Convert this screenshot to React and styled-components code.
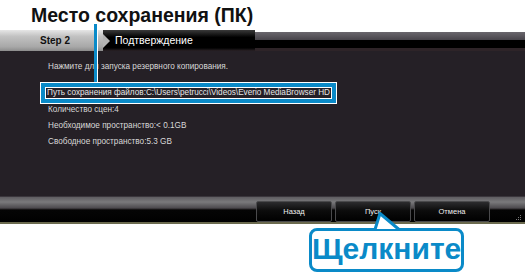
import styled, { createGlobalStyle } from "styled-components";

const BLUE = "#0a8ac8";

const GlobalStyle = createGlobalStyle`
  html, body {
    margin: 0;
    padding: 0;
    background: #ffffff;
  }
  body {
    font-family: "Liberation Sans", Arial, sans-serif;
  }
`;

export default function App() {
  return (
    <>
      <GlobalStyle />
      <Page>
        <Heading>Место сохранения (ПК)</Heading>
        <Window>
          <Header>
            <StepTab>Step 2</StepTab>
            <TitleTab>Подтверждение</TitleTab>
            <HeaderRest />
          </Header>
          <Content>
            <Line>Нажмите для запуска резервного копирования.</Line>
            <PathBox>
              <PathText>
                Путь сохранения файлов:C:\Users\petrucci\Videos\Everio MediaBrowser HD
              </PathText>
            </PathBox>
            <InfoList>
              <Line>Количество сцен:4</Line>
              <Line>Необходимое пространство:&lt; 0.1GB</Line>
              <Line>Свободное пространство:5.3 GB</Line>
            </InfoList>
          </Content>
          <Footer>
            <Button>Назад</Button>
            <Button>Пуск</Button>
            <Button>Отмена</Button>
            <Grip viewBox="0 0 8 8">
              <rect x="6" y="2" width="1" height="1" />
              <rect x="4" y="4" width="1" height="1" />
              <rect x="6" y="4" width="1" height="1" />
              <rect x="2" y="6" width="1" height="1" />
              <rect x="4" y="6" width="1" height="1" />
              <rect x="6" y="6" width="1" height="1" />
            </Grip>
          </Footer>
        </Window>
        <Leader />
        <Callout>
          <CalloutPointer viewBox="0 0 26 18">
            <polygon points="1,17 6,1 25,17" fill="#fff" stroke="none" />
            <polyline points="1,17.5 6,1.5 25,17.5" fill="none" stroke={BLUE} strokeWidth="3" strokeLinejoin="round" />
          </CalloutPointer>
          Щелкните
        </Callout>
      </Page>
    </>
  );
}

const Page = styled.div`
  position: relative;
  width: 525px;
  height: 274px;
  overflow: hidden;
`;

const Heading = styled.div`
  padding: 5px 0 0 31px;
  height: 20px;
  line-height: 20px;
  font-size: 19.5px;
  font-weight: bold;
  color: #111;
  margin-bottom: 5px;
`;

const Window = styled.div`
  display: flex;
  flex-direction: column;
  background: #252026;
`;

const Header = styled.div`
  display: flex;
  height: 21px;
  background: #fff;
`;

const StepTab = styled.div`
  position: relative;
  width: 103px;
  padding-left: 40px;
  box-sizing: border-box;
  background: linear-gradient(#e6e6e6, #c2c2c2 30%, #a8a8a8 80%, #8c8c8c);
  font-size: 10px;
  font-weight: bold;
  line-height: 21px;
  color: #111;

  &::after {
    content: "";
    position: absolute;
    right: -7px;
    top: 4px;
    border-top: 7px solid transparent;
    border-bottom: 7px solid transparent;
    border-left: 7px solid #b4b4b4;
    z-index: 1;
  }
`;

const TitleTab = styled.div`
  width: 152px;
  padding-left: 12px;
  box-sizing: border-box;
  background: linear-gradient(#3a3a3a, #000 35%, #000 85%, #2a2226);
  color: #fff;
  font-size: 10.5px;
  line-height: 21px;
`;

const HeaderRest = styled.div`
  flex: 1;
  background: linear-gradient(
    #fff 0 2px,
    #6a676d 2px,
    #47444a 10px,
    #000 10px,
    #000 18px,
    #2e2428 18px
  );
`;

const Content = styled.div`
  height: 145px;
  padding: 10px 0 0 40px;
  box-sizing: border-box;
  display: flex;
  flex-direction: column;
  align-items: flex-start;
  color: #d8d8d8;
  font-size: 8.2px;
`;

const Line = styled.div`
  line-height: 12px;
  padding-left: 8px;
`;

const PathBox = styled.div`
  margin-top: 9px;
  width: 297px;
  box-sizing: border-box;
  border: 1px solid #fff;
  background: ${BLUE};
  padding: 4px;
`;

const PathText = styled.div`
  border: 1px solid #fff;
  background: #252026;
  line-height: 10px;
  padding-left: 1px;
  white-space: nowrap;
  color: #e6e6e6;
`;

const InfoList = styled.div`
  display: flex;
  flex-direction: column;
  gap: 4px;
`;

const Footer = styled.div`
  position: relative;
  height: 28px;
  box-sizing: border-box;
  display: flex;
  justify-content: flex-end;
  align-items: flex-end;
  gap: 3px;
  padding: 0 35px 2px 0;
  background: linear-gradient(
    #3a363c 0 1px,
    #5e5c60 1px,
    #7a7a7c 6px,
    #4c4a4e 12px,
    #050505 14px,
    #000 26px,
    #6b6a4e 26px
  );
`;

const Button = styled.div`
  width: 76px;
  height: 21px;
  box-sizing: border-box;
  border: 1px solid #4a4a4c;
  border-radius: 2px;
  background: linear-gradient(#2c2c2e, #0c0c0c 45%, #000);
  color: #f0f0f0;
  font-size: 7.5px;
  line-height: 19px;
  text-align: center;
`;

const Grip = styled.svg`
  position: absolute;
  right: 3px;
  bottom: 3px;
  width: 8px;
  height: 8px;
  fill: #777;
`;

const Leader = styled.div`
  position: absolute;
  left: 94px;
  top: 24px;
  width: 3px;
  height: 58px;
  background: ${BLUE};
  box-shadow: 1px 0 0 #fff;
`;

const Callout = styled.div`
  position: absolute;
  left: 309px;
  top: 228px;
  width: 155px;
  height: 44px;
  box-sizing: border-box;
  border: 3px solid ${BLUE};
  border-radius: 8px;
  background: #fff;
  color: ${BLUE};
  font-size: 30px;
  font-weight: bold;
  line-height: 36px;
  text-align: center;
`;

const CalloutPointer = styled.svg`
  position: absolute;
  left: 62px;
  top: -19px;
  width: 26px;
  height: 18px;
  overflow: visible;
`;
